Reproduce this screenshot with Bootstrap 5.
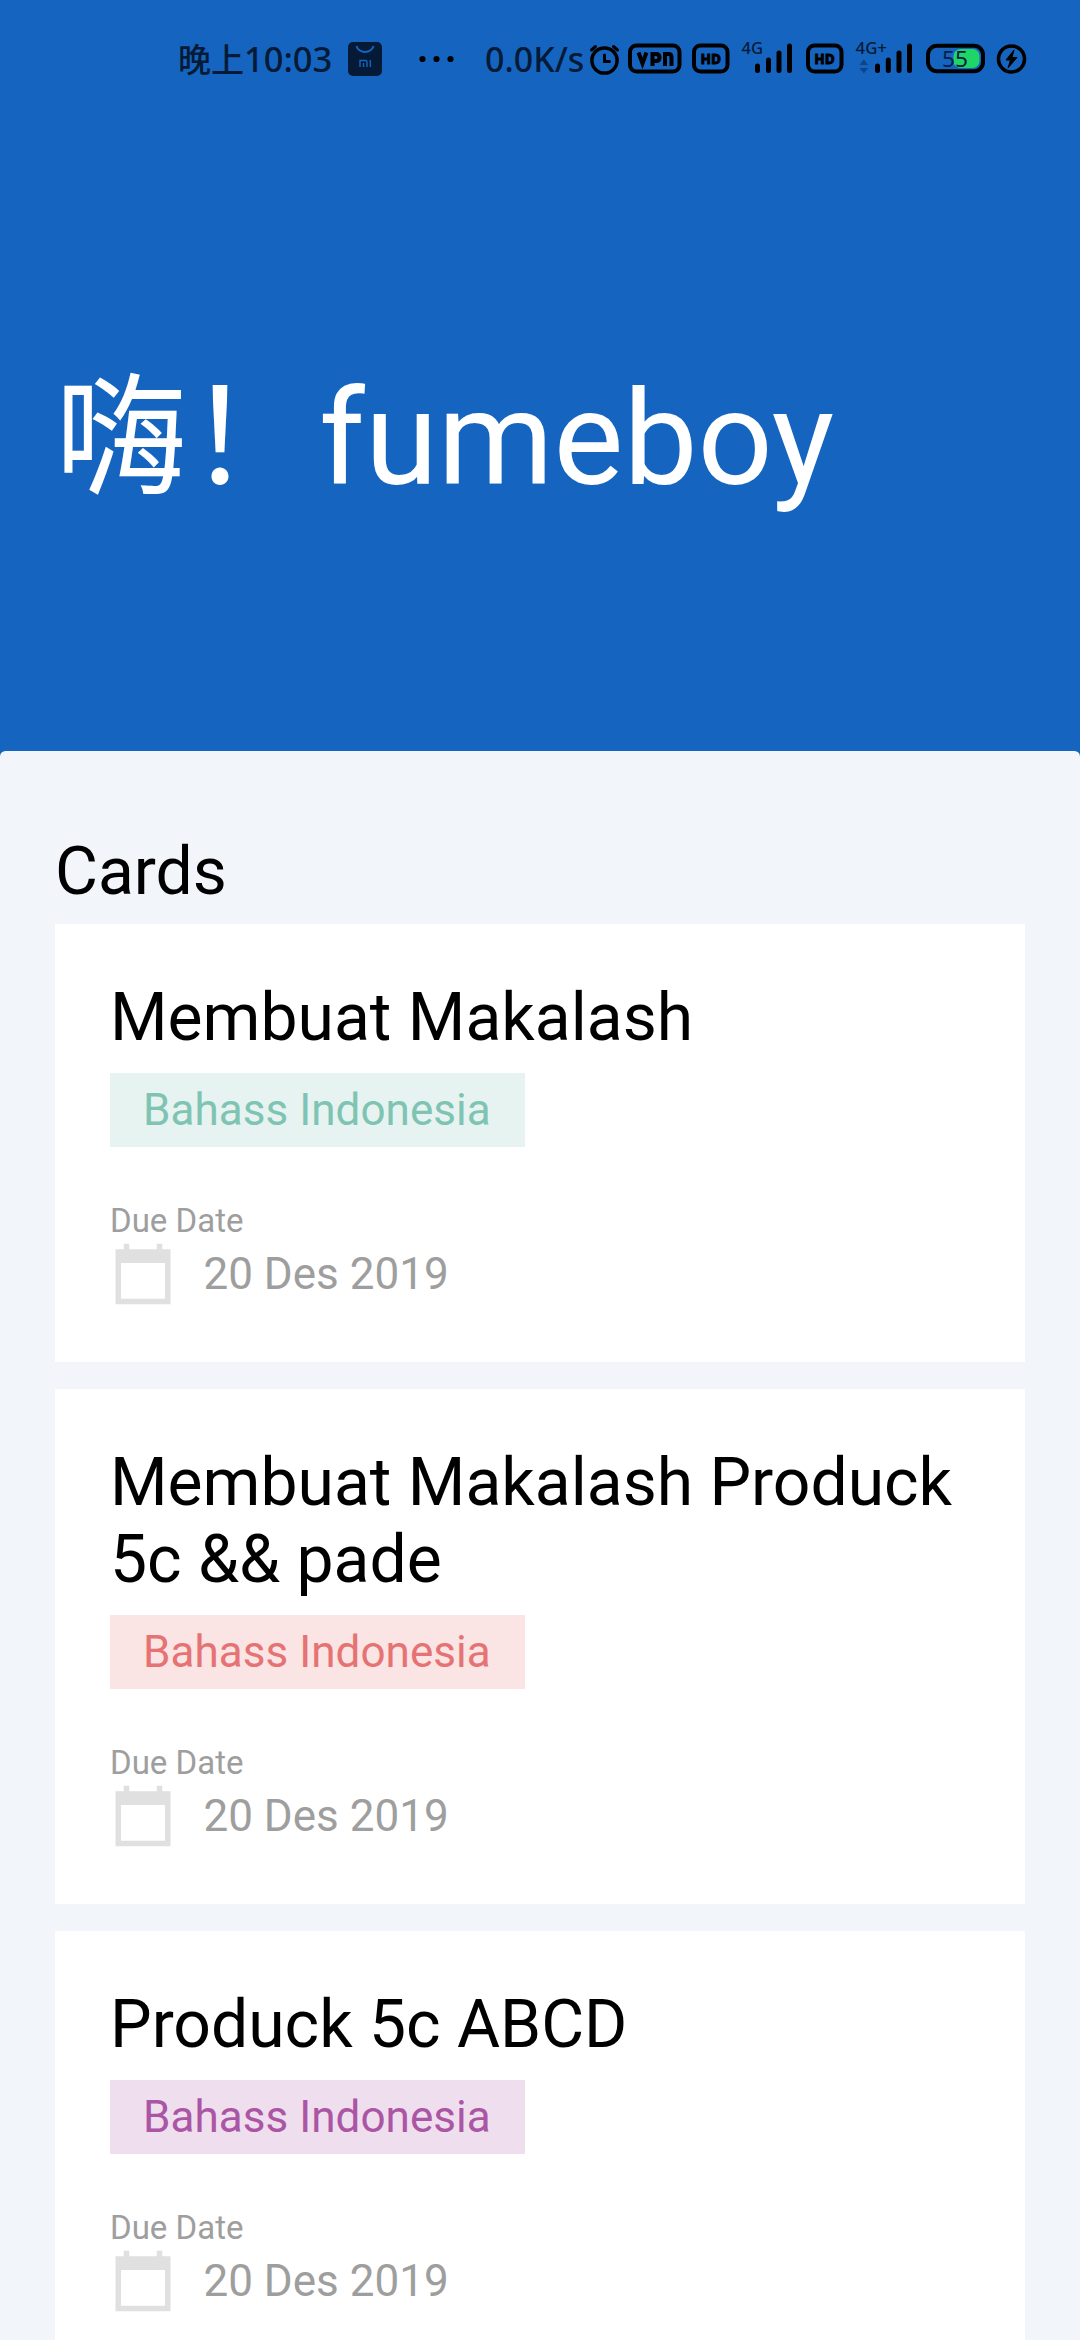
<!DOCTYPE html>
<html lang="zh">
<head>
<meta charset="utf-8">
<meta name="viewport" content="width=device-width, initial-scale=1">
<title>Cards</title>
<link rel="stylesheet" href="https://cdn.jsdelivr.net/npm/bootstrap@5.3.0/dist/css/bootstrap.min.css">
<style>
  html, body { height: 2340px; overflow: hidden; }
  body { background: #1565c0; color: #000; font-family: Roboto, "Noto Sans CJK SC", sans-serif; }
  .screen { width: 1080px; height: 2340px; }
  .status-bar { height: 120px; padding: 40px 50px 0 178px; color: #051a36; font-family: "Noto Sans", "Noto Sans CJK SC", sans-serif; }
  .status-bar svg { flex: none; display: block; overflow: visible; }
  .status-bar text { font-family: "Noto Sans", sans-serif; }
  .clock { width: 170px; margin-top: -2px; font-size: 34.5px; line-height: 40px; font-weight: 500; }
  .clock .han { font-size: 33px; font-family: "Noto Sans CJK SC", sans-serif; }
  .netspeed { width: 104px; margin-top: -1px; padding-left: 3px; font-size: 34px; line-height: 40px; font-weight: 500; }
  .greeting { height: 631px; padding: 242px 55px 0; }
  .greeting h1 { font-size: 132px; line-height: 155px; font-weight: 400; }
  .sheet { background: #f2f5fa; border-radius: 5.5px 5.5px 0 0; padding: 81.5px 55px 0; }
  .sheet-title, .task-title { font-size: 66px; line-height: 77px; font-weight: 400; margin: 0; }
  .sheet-title { margin-bottom: 14.5px; }
  .task-list { gap: 27.5px; }
  .task { padding: 55px; }
  .tag { margin-top: 17px; padding: 12px 34px 10.3px 33px; font-size: 44px; line-height: 51.6px; letter-spacing: .05px; }
  .tag-green { background: #e6f3f0; color: #7fc4b3; }
  .tag-red { background: #fae4e4; color: #e57373; }
  .tag-purple { background: #efdeed; color: #ab55a5; }
  .due { margin-top: 55px; color: #9e9e9e; font-size: 33px; line-height: 38.7px; }
  .due-row { height: 66px; gap: 27.5px; color: #9e9e9e; font-size: 44px; line-height: 51.6px; }
  .due-row span { padding-top: 1.500px; }
</style>
</head>
<body>
<svg class="d-none" aria-hidden="true">
  <symbol id="calendar" viewBox="0 0 24 24"><path fill="#e0e0e0" d="M22 3h-3V1h-2v2H7V1H5v2H2v20h20V3zm-2 18H4V8h16v13z"/></symbol>
</svg>
<main class="screen d-flex flex-column overflow-hidden">
  <header class="status-bar d-flex align-items-start flex-shrink-0">
    <div class="clock text-nowrap"><span class="han">晚上</span>10:03</div>
    <svg width="134" height="40" viewBox="348 40 134 40">
      <rect x="348" y="42" width="34" height="34" rx="5" fill="#051a36"/>
      <path d="M356.5 46a8.7 7.5 0 0 0 17 0" fill="none" stroke="#1565c0" stroke-width="2"/>
      <path d="M360 67v-6.5h5.5q1.5 0 1.5 1.5v5M363.5 67v-4M370.3 60v7" fill="none" stroke="#1565c0" stroke-width="1.4"/>
      <g fill="#000"><circle cx="422.5" cy="59" r="3.1"/><circle cx="436.5" cy="59" r="3.1"/><circle cx="450.5" cy="59" r="3.1"/></g>
    </svg>
    <div class="netspeed text-nowrap">0.0K/s</div>
    <svg width="38" height="40" viewBox="586 40 38 40" fill="none" stroke="#000" stroke-linecap="round">
      <circle cx="604.5" cy="60.5" r="12.6" stroke-width="3.5"/><path d="M604.5 55v6.5h5" stroke-width="3"/><path d="M591.5 50l4-3.5M617.5 50l-4-3.5" stroke-width="3"/>
    </svg>
    <svg width="62" height="40" viewBox="624 40 62 40" fill="none" stroke="#000">
      <rect x="630" y="45.5" width="49.5" height="26" rx="6.5" stroke-width="4"/>
      <path d="M638.500 52.500l4 11 4-11M652.500 66V54h3.500q3.500 0 3.500 3.500t-3.500 3.500h-3M665 66V54h3.500q3 0 3 3v9" stroke-width="4"/>
    </svg>
    <svg width="50" height="40" viewBox="686 40 50 40">
      <rect x="694" y="45.5" width="33.5" height="26" rx="6.5" stroke-width="4" stroke="#000" fill="none"/>
      <text x="710.700" y="64" text-anchor="middle" font-size="14.5" font-weight="800" textLength="20.500" lengthAdjust="spacingAndGlyphs" stroke="#000" stroke-width=".8">HD</text>
    </svg>
    <svg width="64" height="40" viewBox="736 40 64 40">
      <text x="741.5" y="53.500" font-size="16" font-weight="500" fill="#051a36" textLength="21.5" lengthAdjust="spacingAndGlyphs">4G</text>
      <path d="M757.5 66v4.500M768.500 60v10.500M779 53v17.500M789.500 46v24.500" stroke="#000" stroke-width="5" stroke-linecap="round"/>
    </svg>
    <svg width="50" height="40" viewBox="800 40 50 40">
      <rect x="808" y="45.5" width="33.5" height="26" rx="6.5" stroke-width="4" stroke="#000" fill="none"/>
      <text x="824.500" y="64" text-anchor="middle" font-size="14.5" font-weight="800" textLength="20.500" lengthAdjust="spacingAndGlyphs" stroke="#000" stroke-width=".8">HD</text>
    </svg>
    <svg width="68" height="40" viewBox="850 40 68 40">
      <text x="855.5" y="53.500" font-size="16" font-weight="500" fill="#051a36" textLength="31.5" lengthAdjust="spacingAndGlyphs">4G+</text>
      <path d="M859.500 65l4.300-5.500 4.300 5.500zM859.500 68l4.300 5.500 4.300-5.500z" fill="#0f4587"/>
      <path d="M877.5 66v4.500M888.300 60v10.500M899 53v17.500M909.500 46v24.500" stroke="#000" stroke-width="5" stroke-linecap="round"/>
    </svg>
    <svg width="72" height="40" viewBox="918 40 72 40">
      <rect x="953.5" y="49" width="26" height="19" rx="7" fill="#1fd567"/>
      <rect x="928" y="45.700" width="55" height="25.600" rx="9" fill="none" stroke="#000" stroke-width="4"/>
      <text x="942" y="66.500" font-size="22" fill="#04204a" textLength="26" lengthAdjust="spacingAndGlyphs">55</text>
    </svg>
    <svg width="40" height="40" viewBox="990 40 40 40">
      <circle cx="1011.5" cy="59" r="13" fill="none" stroke="#000" stroke-width="3.6"/>
      <path d="M1014 50l-8 10h4.500l-2.500 8 9-10.500h-5z" stroke="#000" stroke-linejoin="round"/>
    </svg>
  </header>
  <section class="greeting flex-shrink-0 text-white"><h1 class="m-0 text-nowrap">嗨！fumeboy</h1></section>
  <section class="sheet flex-grow-1">
    <h2 class="sheet-title">Cards</h2>
    <div class="task-list d-flex flex-column">
      <article class="task card rounded-0 border-0">
        <h3 class="task-title">Membuat Makalash</h3>
        <span class="tag tag-green align-self-start">Bahass Indonesia</span>
        <div class="due">Due Date</div>
        <div class="due-row d-flex align-items-center"><svg width="66" height="66"><use href="#calendar"/></svg><span>20 Des 2019</span></div>
      </article>
      <article class="task card rounded-0 border-0">
        <h3 class="task-title">Membuat Makalash Produck 5c &amp;&amp; pade</h3>
        <span class="tag tag-red align-self-start">Bahass Indonesia</span>
        <div class="due">Due Date</div>
        <div class="due-row d-flex align-items-center"><svg width="66" height="66"><use href="#calendar"/></svg><span>20 Des 2019</span></div>
      </article>
      <article class="task card rounded-0 border-0">
        <h3 class="task-title">Produck 5c ABCD</h3>
        <span class="tag tag-purple align-self-start">Bahass Indonesia</span>
        <div class="due">Due Date</div>
        <div class="due-row d-flex align-items-center"><svg width="66" height="66"><use href="#calendar"/></svg><span>20 Des 2019</span></div>
      </article>
    </div>
  </section>
</main>
<script src="https://cdn.jsdelivr.net/npm/bootstrap@5.3.0/dist/js/bootstrap.bundle.min.js"></script>
</body>
</html>
